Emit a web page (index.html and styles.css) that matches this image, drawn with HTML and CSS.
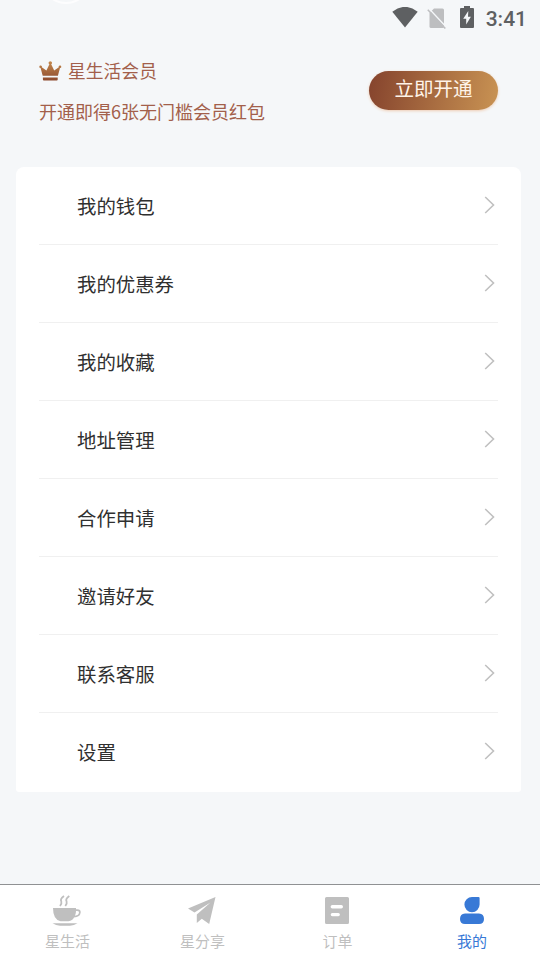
FILE: index.html
```html
<!DOCTYPE html>
<html lang="zh-CN">
<head>
<meta charset="utf-8">
<title>我的</title>
<link rel="stylesheet" href="styles.css">
</head>
<body>
<div class="avatar-edge"></div>
<header class="status">
  <svg class="wifi" width="26" height="21" viewBox="0 0 26 21"><path d="M0.3 4.700Q13-5 25.700 4.700L13 20.400Z" fill="#5e6062"/></svg>
  <svg class="sim" width="20" height="22" viewBox="0 0 20 22"><path d="M7 .5H15.500Q17 .5 17 2V18.500Q17 20 15.500 20H4Q2.500 20 2.500 18.500V5Z" fill="#bdbec0"/><path d="M1.600 .3L19.700 19.600" stroke="#f5f7f9" stroke-width="1.500"/><path d="M.8 1.800L18.300 20.600" stroke="#bdbec0" stroke-width="1.500"/></svg>
  <svg class="battery" width="14" height="22" viewBox="0 0 14 22"><path d="M4 0H10V2H13Q14 2 14 3V21Q14 22 13 22H1Q0 22 0 21V3Q0 2 1 2H4Z" fill="#5e6062"/><path d="M8.300 5L3.200 12.700H6.200V18.500L10.900 10.700H8Z" fill="#f5f7f9"/></svg>
  <span class="clock">3:41</span>
</header>
<section class="member">
  <div class="member-text">
    <div class="member-title">
      <svg width="24" height="20" viewBox="0 0 24 20"><defs><linearGradient id="crown" x1="0" y1="0" x2="0" y2="1"><stop offset="0" stop-color="#c4894d"/><stop offset="1" stop-color="#8d4a2e"/></linearGradient></defs><path d="M3.700 14.800L1.600 7.100A1.300 1.300 0 1 1 2.800 6.300L7.400 9.500L10.400 3.200A1.600 1.600 0 1 1 12.200 3.200L15.200 9.500L19.800 6.300A1.300 1.300 0 1 1 21 7.100L18.900 14.800ZM3.900 16.600H18.700V18.500Q18.700 19.400 17.800 19.400H4.800Q3.900 19.400 3.900 18.500Z" fill="url(#crown)"/></svg>
      <span>星生活会员</span>
    </div>
    <p class="member-desc">开通即得6张无门槛会员红包</p>
  </div>
  <button class="open">立即开通</button>
</section>
<main class="menu">
  <a class="row"><span>我的钱包</span><svg class="arrow" viewBox="0 0 11 18"><path d="M1.200 1L9.500 9L1.200 17"/></svg></a>
  <a class="row"><span>我的优惠券</span><svg class="arrow" viewBox="0 0 11 18"><path d="M1.200 1L9.500 9L1.200 17"/></svg></a>
  <a class="row"><span>我的收藏</span><svg class="arrow" viewBox="0 0 11 18"><path d="M1.200 1L9.500 9L1.200 17"/></svg></a>
  <a class="row"><span>地址管理</span><svg class="arrow" viewBox="0 0 11 18"><path d="M1.200 1L9.500 9L1.200 17"/></svg></a>
  <a class="row"><span>合作申请</span><svg class="arrow" viewBox="0 0 11 18"><path d="M1.200 1L9.500 9L1.200 17"/></svg></a>
  <a class="row"><span>邀请好友</span><svg class="arrow" viewBox="0 0 11 18"><path d="M1.200 1L9.500 9L1.200 17"/></svg></a>
  <a class="row"><span>联系客服</span><svg class="arrow" viewBox="0 0 11 18"><path d="M1.200 1L9.500 9L1.200 17"/></svg></a>
  <a class="row"><span>设置</span><svg class="arrow" viewBox="0 0 11 18"><path d="M1.200 1L9.500 9L1.200 17"/></svg></a>
</main>
<nav class="tabs">
  <a class="tab">
    <svg viewBox="0 0 32 32"><path d="M2 13H25V14.300Q30 13.700 29.700 17.500Q29.300 22 23 22.600Q21.500 25.700 17.500 26.300H9.500Q2 24.500 2 13ZM25 16.100Q25 18.700 24 20.700Q27.700 20 28 17.400Q28.100 15.800 25 16.100ZM1.500 28.300H26.500Q23 30.700 19 30.700H9Q5 30.700 1.500 28.300Z"/><path class="steam" d="M13 1Q8.800 4 10.300 6.500Q11 8.500 9 11M18.300 1Q14.100 4 15.600 6.500Q16.300 8.500 14.300 11"/></svg>
    <span>星生活</span>
  </a>
  <a class="tab">
    <svg viewBox="0 0 32 32"><path d="M29.500 1.900L2 13.500L8.500 17.400L24.500 7.500L10.800 19.600V27.900L15.800 23.800L23.200 29Z"/></svg>
    <span>星分享</span>
  </a>
  <a class="tab">
    <svg viewBox="0 0 32 32"><path fill-rule="evenodd" d="M5.500 2H26.500Q28 2 28 3.500V27.500Q28 29 26.500 29H5.500Q4 29 4 27.500V3.500Q4 2 5.500 2ZM11.300 10A1.700 1.700 0 0 0 11.300 13.400H20.300A1.700 1.700 0 0 0 20.300 10ZM11.300 18A1.600 1.600 0 0 0 11.300 21.200H17.300A1.600 1.600 0 0 0 17.300 18Z"/></svg>
    <span>订单</span>
  </a>
  <a class="tab active">
    <svg viewBox="0 0 32 32"><path d="M16 2H22.500Q23.600 2 23.600 3.100V9.600A7.600 7.600 0 1 1 16 2ZM9 18.500H23Q28 18.800 28 24Q28 29 23 29H9Q4 29 4 24Q4 18.800 9 18.500Z"/></svg>
    <span>我的</span>
  </a>
</nav>
</body>
</html>
```
FILE: styles.css
```css
* { box-sizing: border-box; }
body {
  margin: 0;
  width: 540px;
  height: 960px;
  overflow: hidden;
  display: flex;
  flex-direction: column;
  background: #f5f7f9;
  font-family: Roboto, "Noto Sans CJK SC", sans-serif;
}
svg { display: block; flex: none; }
.avatar-edge {
  position: absolute;
  left: 41px;
  top: -46px;
  width: 50px;
  height: 50px;
  border: 2px solid #fdfdfe;
  border-radius: 50%;
}
.status {
  height: 36px;
  flex: none;
  display: flex;
  align-items: flex-start;
  padding: 7px 13px 0 0;
  justify-content: flex-end;
  color: #5e6062;
}
.sim { margin: 1px 0 0 9px; }
.battery { margin-left: 13px; margin-top: -1px; }
.clock { margin-left: 12px; font-size: 21px; font-weight: 500; line-height: 24px; }
.member {
  height: 131px;
  flex: none;
  display: flex;
  justify-content: space-between;
  align-items: flex-start;
  padding: 23px 42px 0 39px;
  color: #a35f4b;
  font-family: "Noto Sans CJK SC", sans-serif;
  font-size: 18px;
}
.member-title { display: flex; align-items: center; gap: 5px; height: 22px; line-height: 22px; font-size: 17.8px; }
.member-title svg { margin-top: 2px; }
.member-desc { margin: 17px 0 0; line-height: 26px; }
.open {
  width: 129px;
  height: 39px;
  margin-top: 12px;
  padding: 0 0 5px;
  border: 0;
  border-radius: 20px;
  background: linear-gradient(100deg, #85432d, #c99353);
  box-shadow: 0 1px 3px #efcdb3;
  color: #fff4e9;
  font: 19.5px/34px "Noto Sans CJK SC", sans-serif;
}
.menu {
  width: 505px;
  height: 625px;
  flex: none;
  margin-left: 16px;
  padding: 0 23px;
  border-radius: 8px 8px 3px 3px;
  background: #fff;
}
.row {
  height: 78px;
  display: flex;
  align-items: center;
  justify-content: space-between;
  padding: 0 3px 0 38px;
  border-bottom: 1px solid #f0f0f0;
  color: #303030;
  font-size: 19.4px;
}
.row:last-child { border-bottom-color: transparent; }
.arrow {
  width: 11px;
  height: 18px;
  margin-top: -2px;
  fill: none;
  stroke: #c0c0c0;
  stroke-width: 1.6;
}
.tabs {
  height: 76px;
  flex: none;
  margin-top: auto;
  display: flex;
  border-top: 1px solid #8f9193;
  background: #fff;
}
.tab {
  flex: 1;
  display: flex;
  flex-direction: column;
  align-items: center;
  padding-top: 10px;
  color: #bfbfbf;
  font-size: 15px;
  line-height: 22px;
}
.tab svg { width: 32px; height: 32px; fill: currentColor; margin: 0 1px 4px 0; }
.tab.active span { margin-right: 1px; }
.steam { fill: none; stroke: currentColor; stroke-width: 1.8; }
.tab.active { color: #3879d6; }
```
